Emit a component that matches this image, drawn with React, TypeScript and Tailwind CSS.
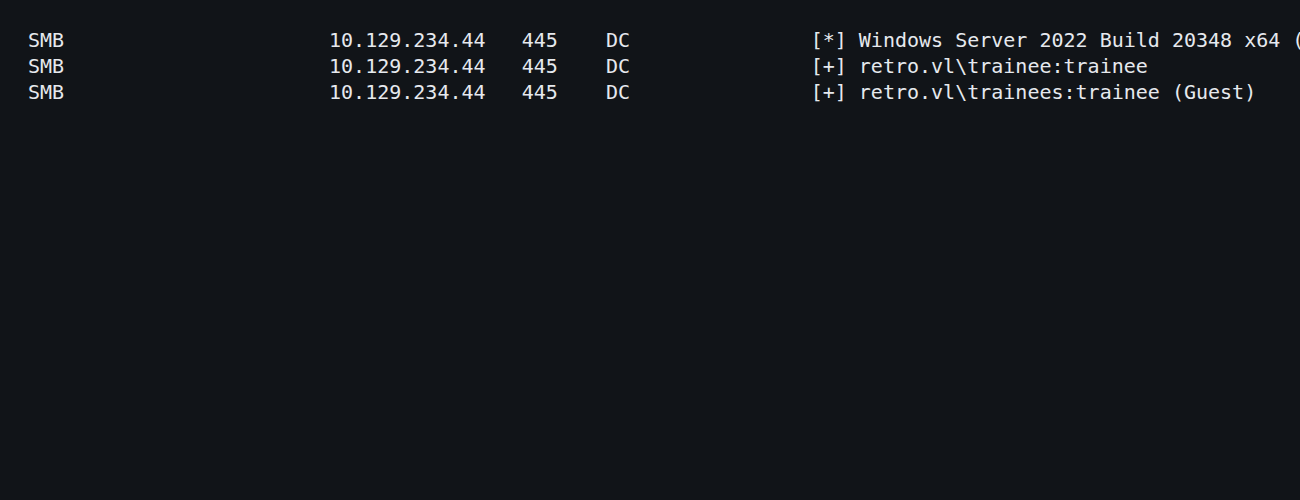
const LINES = [
  "SMB                      10.129.234.44   445    DC               [*] Windows Server 2022 Build 20348 x64 (name:DC) (domain:retro.vl) (signing:True) (SMBv1:False)",
  "SMB                      10.129.234.44   445    DC               [+] retro.vl\\trainee:trainee",
  "SMB                      10.129.234.44   445    DC               [+] retro.vl\\trainees:trainee (Guest)",
]

export default function App() {
  return (
    <div className="h-[500px] w-full overflow-hidden bg-[#111418]">
      <pre className="whitespace-pre px-7 pt-[27px] font-['DejaVu_Sans_Mono',monospace] text-[20px] leading-[26px] text-[#e6e9ee]">
        {LINES.join("\n")}
      </pre>
    </div>
  )
}
